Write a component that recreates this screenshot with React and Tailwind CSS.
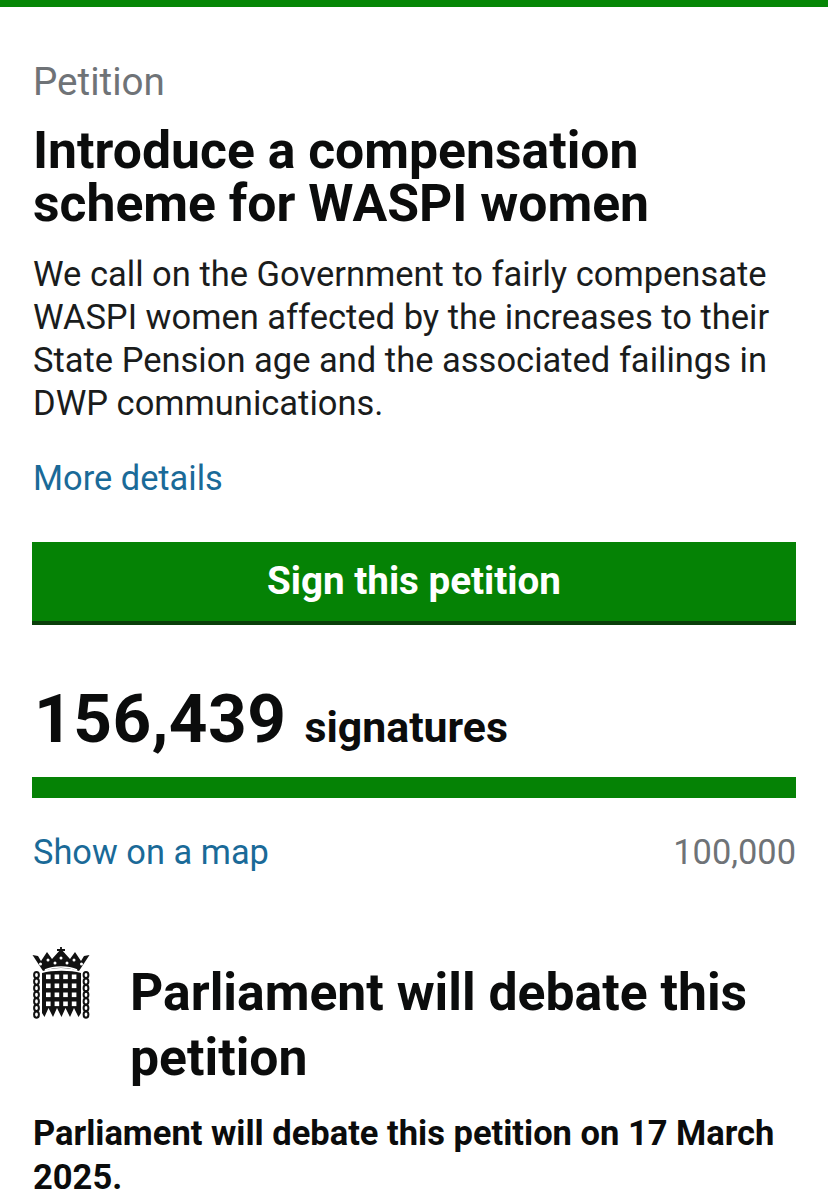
import React from "react";

function Portcullis() {
  const cols = [0, 1, 2, 3];
  const rows = [0, 1, 2, 3];
  const chain = [0, 1, 2, 3, 4, 5, 6];
  return (
    <svg width="58" height="72" viewBox="0 0 58 72" className="block">
      {/* crown */}
      <path d="M0.5 8 L6 9 L9 14 L15 5 L20 12 L29 2 L38 12 L43 5 L49 14 L52 9 L57.5 8 L47 24 C38 20 20 20 11 24 Z" fill="#111" />
      <path d="M25 3h8M29 0v6" stroke="#111" strokeWidth="1.8" />
      <circle cx="8.5" cy="17" r="1.5" fill="#fff" />
      <circle cx="16" cy="13" r="1.5" fill="#fff" />
      <circle cx="23" cy="16" r="1.5" fill="#fff" />
      <circle cx="29" cy="11" r="1.5" fill="#fff" />
      <circle cx="35" cy="16" r="1.5" fill="#fff" />
      <circle cx="42" cy="13" r="1.5" fill="#fff" />
      <circle cx="49.5" cy="17" r="1.5" fill="#fff" />
      <path d="M13 23 C22 19 36 19 45 23" fill="none" stroke="#fff" strokeWidth="1.6" />
      {/* grille */}
      <path d="M10 26 C20 23 39 23 49 26 L49 66 L46.5 70 L42 61 L38 70 L33.5 61 L29.5 70 L25 61 L21 70 L16.5 61 L12.5 70 L10 66 Z" fill="#111" />
      {rows.map((r) =>
        cols.map((c) => (
          <rect key={`${r}-${c}`} x={14 + c * 8.6} y={27.5 + r * 9} width="4.6" height="4.6" fill="#fff" />
        ))
      )}
      {/* chains */}
      {chain.map((i) => (
        <g key={i} fill="none" stroke="#111" strokeWidth="2">
          <ellipse cx="4.5" cy={28 + i * 6.6} rx="2.4" ry="3.1" />
          <ellipse cx="54" cy={28 + i * 6.6} rx="2.4" ry="3.1" />
        </g>
      ))}
    </svg>
  );
}

export default function App() {
  return (
    <div className="w-[828px] h-[1200px] overflow-hidden bg-white font-['Roboto',sans-serif] text-[#0b0c0c]">
      <div className="h-[7px] bg-[#068606]" />
      <main className="px-8 pt-[52px]">
        <p className="text-[38.6px] leading-[46px] text-[#6f7377] ml-[1px]">Petition</p>
        <h1 className="mt-[19px] text-[51.7px] leading-[53px] font-bold ml-[1px]">
          Introduce a compensation
          <br />
          scheme for WASPI women
        </h1>
        <p className="mt-[23px] ml-[1px] text-[34.5px] leading-[43px] text-[#1a1c1c]">
          We call on the Government to fairly compensate
          <br />
          WASPI women affected by the increases to their
          <br />
          State Pension age and the associated failings in
          <br />
          DWP communications.
        </p>
        <a className="block mt-[31px] ml-[1px] text-[34.4px] leading-[44px] text-[#1a6a98]">More details</a>
        <button className="mt-[42px] block w-[764px] h-[83px] pb-[2px] bg-[#058205] border-b-[4px] border-[#0a3f0a] text-white text-[38.6px] font-bold">
          Sign this petition
        </button>
        <div className="mt-[54px] flex items-baseline ml-[2px]">
          <span className="text-[67.5px] leading-[80px] font-bold tracking-[0.5px]">156,439</span>
          <span className="ml-[18px] text-[42.8px] font-bold">signatures</span>
        </div>
        <div className="mt-[18px] h-[21px] w-[764px] bg-[#058205]" />
        <div className="mt-[32px] flex justify-between items-center text-[34.4px] leading-[44px] ml-[1px]">
          <a className="text-[#1a6a98]">Show on a map</a>
          <span className="text-[#6f7377]">100,000</span>
        </div>
        <section className="mt-[52px] flex">
          <div className="w-[98px] shrink-0 pt-[21px]">
            <Portcullis />
          </div>
          <h2 className="text-[51.7px] leading-[65px] font-bold pt-[34px]">
            Parliament will debate this
            <br />
            petition
          </h2>
        </section>
        <p className="mt-[21px] ml-[1px] text-[34.5px] leading-[44px] font-bold">
          Parliament will debate this petition on 17 March
          <br />
          2025.
        </p>
      </main>
    </div>
  );
}
